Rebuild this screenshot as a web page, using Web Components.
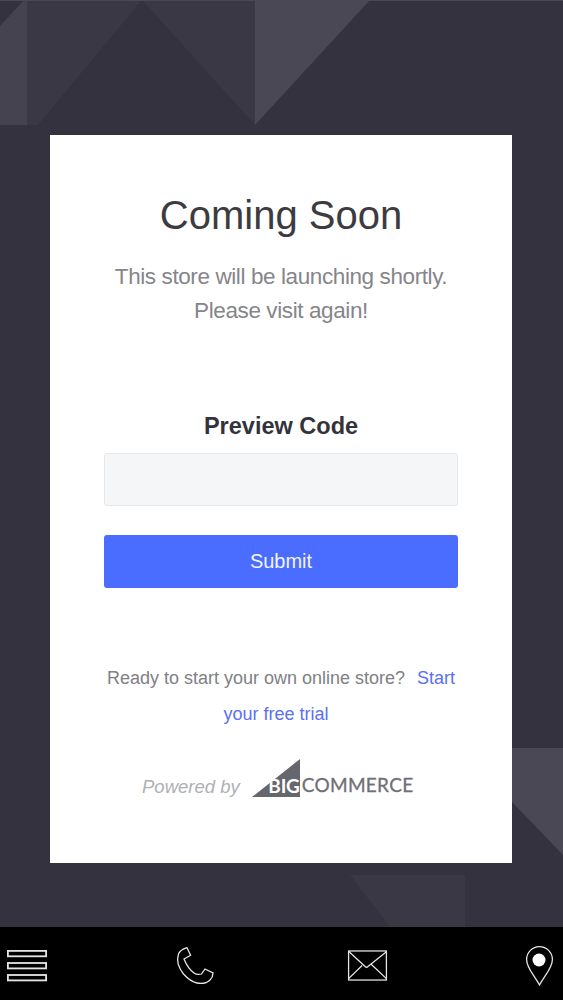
<!DOCTYPE html>
<html lang="en">
<head>
<meta charset="utf-8">
<title>Coming Soon</title>
<style>
  html, body { margin: 0; padding: 0; background: #34323e; }
  body { font-family: "Liberation Sans", Arial, sans-serif; }
</style>
</head>
<body>
<store-page>
  <coming-soon-card></coming-soon-card>
</store-page>
<script>
class StorePage extends HTMLElement {
  constructor() {
    super();
    this.attachShadow({ mode: 'open' });
    this.shadowRoot.innerHTML = `
      <style>
        :host { display: block; width: 563px; height: 1000px; overflow: hidden; }
        main {
          position: relative;
          height: 927px;
          box-sizing: border-box;
          padding: 135px 51px 0 50px;
          background: #34323e;
          overflow: hidden;
        }
        svg.bg { position: absolute; left: 0; top: 0; width: 563px; height: 927px; filter: blur(.6px); }
        .card-wrap { position: relative; }
      </style>
      <main>
        <svg class="bg" viewBox="0 0 563 927" aria-hidden="true">
          <polygon points="27,0 142,0 38,125 27,125" fill="#3a3844"/>
          <polygon points="142,0 255,0 255,125" fill="#3a3844"/>
          <polygon points="0,26 24,0 27,0 27,125 0,125" fill="#45434f"/>
          <polygon points="255,0 370,0 255,125" fill="#4a4855"/>
          <polygon points="512,748 563,748 563,855 512,802" fill="#4a4855"/>
          <polygon points="350,875 465,875 465,927 390,927" fill="#3a3844"/>
          <rect x="0" y="0" width="563" height="1" fill="#4a4855"/>
        </svg>
        <div class="card-wrap"><slot></slot></div>
      </main>
      <bottom-bar></bottom-bar>
    `;
  }
}

class ComingSoonCard extends HTMLElement {
  constructor() {
    super();
    this.attachShadow({ mode: 'open' });
    this.shadowRoot.innerHTML = `
      <style>
        :host {
          display: block;
          width: 462px;
          height: 728px;
          box-sizing: border-box;
          padding: 54px 54px 0;
          background: #fff;
          text-align: center;
        }
        h1 { margin: 0; font-size: 40px; line-height: 52px; font-weight: 400; color: #3c3c40; }
        p.lead { margin: 19px -20px 0; font-size: 22.5px; line-height: 34px; letter-spacing: -.4px; color: #85858a; }
      </style>
      <h1>Coming Soon</h1>
      <p class="lead">This store will be launching shortly.<br>Please visit again!</p>
      <preview-form></preview-form>
      <trial-note></trial-note>
      <powered-by></powered-by>
    `;
  }
}

class PreviewForm extends HTMLElement {
  constructor() {
    super();
    this.attachShadow({ mode: 'open' });
    this.shadowRoot.innerHTML = `
      <style>
        :host { display: block; margin-top: 81px; }
        label { display: block; font-size: 23.5px; line-height: 34px; font-weight: 700; color: #33333b; }
        .field {
          display: block;
          width: 100%;
          height: 53px;
          box-sizing: border-box;
          margin-top: 10px;
          background: #f5f6f7;
          border: 1px solid #e6e7e9;
          border-radius: 3px;
        }
        button {
          display: block;
          width: 100%;
          height: 53px;
          margin-top: 29px;
          padding: 0;
          border: 0;
          border-radius: 3px;
          background: #4a6cff;
          color: #f2f4ff;
          font: 400 20px "Liberation Sans", Arial, sans-serif;
        }
      </style>
      <label for="code">Preview Code</label>
      <input class="field" id="code" type="text">
      <button type="button">Submit</button>
    `;
  }
}

class TrialNote extends HTMLElement {
  constructor() {
    super();
    this.attachShadow({ mode: 'open' });
    this.shadowRoot.innerHTML = `
      <style>
        :host {
          display: block;
          margin: 72px -2px 0;
          font-size: 18px;
          line-height: 36px;
          color: #808085;
          text-align: center;
        }
        a { color: #5a70f5; text-decoration: none; margin-left: 2px; }
      </style>
      Ready to start your own online store? &nbsp;<a href="#">Start your free trial</a>&nbsp;&nbsp;
    `;
  }
}

class PoweredBy extends HTMLElement {
  constructor() {
    super();
    this.attachShadow({ mode: 'open' });
    this.shadowRoot.innerHTML = `
      <style>
        :host {
          display: flex;
          align-items: flex-end;
          margin: 25px 0 0 38px;
          height: 40px;
        }
        em { font-size: 18.5px; line-height: 26px; color: #aeb0b6; margin: 0 12px -3px 0; }
        .logo { position: relative; display: flex; align-items: flex-end; height: 38px; }
        .mark { position: relative; width: 48px; height: 38px; }
        .mark svg { display: block; }
        .big {
          position: absolute; right: 0; bottom: 3px;
          font: 700 19px/17px Lato, "Liberation Sans", sans-serif;
          color: #fff;
          letter-spacing: -.2px;
        }
        .commerce {
          margin-left: 2px;
          font: 400 19px/24px Lato, "Liberation Sans", sans-serif;
          letter-spacing: .3px;
          color: #6f6f76;
          -webkit-text-stroke: .3px #6f6f76;
        }
      </style>
      <em>Powered by</em>
      <span class="logo">
        <span class="mark">
          <svg width="48" height="38" viewBox="0 0 48 38" aria-hidden="true"><polygon points="0,38 48,0 48,38" fill="#66666e"/></svg>
          <span class="big">BIG</span>
        </span>
        <span class="commerce">COMMERCE</span>
      </span>
    `;
  }
}

class BottomBar extends HTMLElement {
  constructor() {
    super();
    this.attachShadow({ mode: 'open' });
    this.shadowRoot.innerHTML = `
      <style>
        :host {
          display: flex;
          align-items: center;
          height: 73px;
          box-sizing: border-box;
          padding: 3px 0 0 7px;
          background: #000;
        }
        svg { display: block; fill: none; stroke: #e6e6e6; stroke-width: 1.3; overflow: visible; }
        .menu { stroke-width: 1.8; }
        .phone { margin-left: 130px; }
        .mail { margin-left: 135px; }
        .pin { margin-left: 139px; }
      </style>
      <svg class="menu" width="40" height="31" viewBox="0 0 40 31" aria-label="Menu">
        <rect x=".9" y=".9" width="38.2" height="5.4"/>
        <rect x=".9" y="13" width="38.2" height="5.4"/>
        <rect x=".9" y="25" width="38.2" height="5.4"/>
      </svg>
      <svg class="phone" width="36" height="36" viewBox="0 0 36 36" aria-label="Call">
        <path d="M10 .7C6 2 2.5 4 1.5 7C-.5 13 1 20 6.5 27C11 32 15 35 20 36C25 37 30 36 33 33C35 31 36 28 36 26L28 22L24.5 27C21 28 19 27.5 17 26C13 23 9 17 7 12L13.6 8.3Z"/>
      </svg>
      <svg class="mail" width="39" height="31" viewBox="0 0 40 31" aria-label="Email">
        <rect x=".6" y=".6" width="38.8" height="29.8"/>
        <path d="M.6 .8L17.5 16.5Q19 18 20.5 16.5L39.4 1.5M.6 29L14.5 15.5M39.4 29L24 14.5"/>
      </svg>
      <svg class="pin" width="27" height="39" viewBox="0 0 27 39" aria-label="Location">
        <path d="M13.5 39C8 29 .6 22 .6 13.5A12.9 12.9 0 0 1 26.4 13.5C26.4 22 19 29 13.5 39Z"/>
        <circle cx="13" cy="14" r="6.5" fill="#fff" stroke="none"/>
      </svg>
    `;
  }
}

customElements.define('coming-soon-card', ComingSoonCard);
customElements.define('preview-form', PreviewForm);
customElements.define('trial-note', TrialNote);
customElements.define('powered-by', PoweredBy);
customElements.define('bottom-bar', BottomBar);
customElements.define('store-page', StorePage);
</script>
</body>
</html>
